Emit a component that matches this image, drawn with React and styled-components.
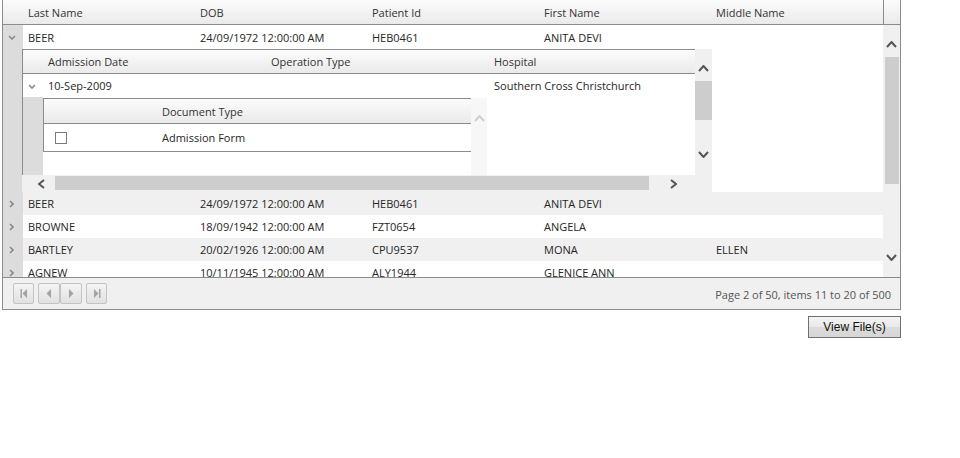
import React from "react";
import styled, { createGlobalStyle } from "styled-components";

const GlobalStyle = createGlobalStyle`
  * { box-sizing: border-box; }
  html, body { margin: 0; background: #fff; }
  body {
    font-family: "Open Sans", "Segoe UI", sans-serif;
    font-size: 11px;
    color: #262626;
  }
`;

const Page = styled.div`
  width: 960px;
  height: 458px;
  padding-left: 2px;
  overflow: hidden;
`;

const Grid = styled.div`
  width: 899px;
  border: 1px solid #8c8c8c;
  border-top: 0;
`;

const HeaderBar = styled.div`
  display: grid;
  grid-template-columns: 20px repeat(5, 172px) 17px;
  height: 25px;
  border-bottom: 1px solid #8c8c8c;
  background: linear-gradient(#fcfcfc, #eaeaea);
`;

const HeadCell = styled.div`
  display: flex;
  align-items: center;
  padding: 0 0 0 5px;
  white-space: nowrap;
  overflow: hidden;
  color: #333;
  border-left: ${(p) => (p.$divider ? "1px solid #8c8c8c" : "0")};
`;

const Body = styled.div`
  display: flex;
  height: 252px;
`;

const Viewport = styled.div`
  width: 880px;
  overflow: hidden;
`;

const Row = styled.div`
  display: grid;
  grid-template-columns: ${(p) => p.$cols || "20px repeat(5, 172px)"};
  height: ${(p) => p.$h || 23}px;
  background: ${(p) => (p.$alt ? "#f0f0f0" : "#fff")};
`;

const HierCell = styled.div`
  display: flex;
  align-items: center;
  justify-content: center;
  padding: 1px 3px 0 0;
  background: ${(p) => p.$bg || "#dcdcdc"};
`;

const Cell = styled.div`
  display: flex;
  align-items: center;
  padding: 0 0 0 5px;
  white-space: nowrap;
  overflow: hidden;
`;

const DetailRow = styled.div`
  display: grid;
  grid-template-columns: 19px 1fr;
  height: 143px;
  background: #fff;
`;

const DetailCell = styled.div`
  display: flex;
`;

const DetailGrid = styled.div`
  display: grid;
  grid-template-columns: 673px 17px;
  grid-template-rows: 126px 17px;
  width: 690px;
`;

const DViewport = styled.div`
  border-left: 1px solid #8c8c8c;
  border-top: 1px solid #8c8c8c;
  overflow: hidden;
  background: #fff;
`;

const DHeader = styled.div`
  display: grid;
  grid-template-columns: 20px repeat(3, 223px);
  width: 689px;
  height: 24px;
  border-bottom: 1px solid #8c8c8c;
  background: linear-gradient(#fcfcfc, #eaeaea);
`;

const NestedRow = styled.div`
  display: grid;
  grid-template-columns: 20px 1fr;
  height: 78px;
`;

const NestedCell = styled.div`
  display: flex;
  padding-top: 1px;
  background: #fff;
`;

const InnerGrid = styled.div`
  width: 428px;
  height: 77px;
`;

const InnerTable = styled.div`
  border: 1px solid #8c8c8c;
  border-right: 0;
`;

const InnerHead = styled.div`
  display: grid;
  grid-template-columns: 113px 1fr;
  height: 25px;
  border-bottom: 1px solid #8c8c8c;
  background: linear-gradient(#fcfcfc, #eaeaea);
`;

const InnerRow = styled.div`
  display: grid;
  grid-template-columns: 113px 1fr;
  height: 27px;
`;

const CheckCell = styled.div`
  display: flex;
  align-items: center;
  padding: 1px 0 0 11px;
`;

const CheckBox = styled.span`
  width: 12px;
  height: 12px;
  border: 1px solid #7a7a7a;
  background: #fff;
`;

const VScroll = styled.div`
  display: flex;
  flex-direction: column;
  align-items: center;
  width: ${(p) => p.$w || 17}px;
  background: ${(p) => p.$bg || "#f0f0f0"};
`;

const ArrowBox = styled.div`
  display: flex;
  justify-content: center;
  line-height: 0;
  margin-top: ${(p) => p.$mt || 0}px;
  margin-bottom: ${(p) => p.$mb || 0}px;
  margin-left: ${(p) => p.$ml || 0}px;
`;

const VThumb = styled.div`
  align-self: stretch;
  margin: ${(p) => p.$mt}px ${(p) => p.$mr || 0}px 0 ${(p) => p.$mlft || 0}px;
  height: ${(p) => p.$h}px;
  background: #cdcdcd;
`;

const Spacer = styled.div`
  flex: 1;
`;

const HScroll = styled.div`
  display: flex;
  align-items: center;
  padding-left: 16px;
  background: #f0f0f0;
`;

const HThumb = styled.div`
  width: 594px;
  height: 14px;
  margin-left: 10px;
  margin-bottom: 1px;
  background: #cdcdcd;
`;

const Corner = styled.div`
  background: #f0f0f0;
`;

const Filler = styled.div`
  flex: 1;
  background: #fff;
`;

const Pager = styled.div`
  display: flex;
  align-items: center;
  height: 32px;
  padding: 0 9px 0 10px;
  border-top: 1px solid #8c8c8c;
  background: #f0f0f0;
`;

const PagerGroup = styled.div`
  display: flex;
  margin-right: 4px;
`;

const PagerButton = styled.button`
  display: flex;
  align-items: center;
  justify-content: center;
  width: ${(p) => p.$w || 21}px;
  height: 21px;
  padding: 0;
  margin: 0;
  border: 1px solid #c3c3c3;
  border-radius: 2px;
  background: linear-gradient(#f4f4f4, #e1e1e1);
`;

const PagerInfo = styled.div`
  margin-left: auto;
  padding-top: 2px;
  color: #555;
`;

const Footer = styled.div`
  display: flex;
  justify-content: flex-end;
  width: 899px;
  margin-top: 6px;
`;

const ActionButton = styled.button`
  width: 93px;
  height: 22px;
  padding: 0;
  border: 1px solid #707070;
  border-radius: 0;
  background: linear-gradient(#f4f4f4 0%, #e9e9e9 50%, #dcdcdc 51%, #d6d6d6 100%);
  font-family: "Liberation Sans", Arial, sans-serif;
  font-size: 12px;
  color: #111;
`;

const Chevron = ({ dir, w = 8, h = 5, color = "#8a8a8a", sw = 1.6 }) => {
  const d = {
    down: `M1 1 L${w / 2} ${h - 1} L${w - 1} 1`,
    up: `M1 ${h - 1} L${w / 2} 1 L${w - 1} ${h - 1}`,
    right: `M1 1 L${w - 1} ${h / 2} L1 ${h - 1}`,
    left: `M${w - 1} 1 L1 ${h / 2} L${w - 1} ${h - 1}`,
  }[dir];
  return (
    <svg width={w} height={h} viewBox={`0 0 ${w} ${h}`}>
      <path d={d} fill="none" stroke={color} strokeWidth={sw} />
    </svg>
  );
};

const PagerIcon = ({ kind }) => {
  const c = "#a3a3a3";
  return (
    <svg width="8" height="9" viewBox="0 0 8 9">
      {kind === "first" && (
        <>
          <rect x="0.5" y="0" width="1.5" height="9" fill={c} />
          <polygon points="7,0 2.5,4.5 7,9" fill={c} />
        </>
      )}
      {kind === "prev" && <polygon points="6,0 1.5,4.5 6,9" fill={c} />}
      {kind === "next" && <polygon points="2,0 6.5,4.5 2,9" fill={c} />}
      {kind === "last" && (
        <>
          <polygon points="1,0 5.5,4.5 1,9" fill={c} />
          <rect x="6" y="0" width="1.5" height="9" fill={c} />
        </>
      )}
    </svg>
  );
};

const columns = ["Last Name", "DOB", "Patient Id", "First Name", "Middle Name"];

const patients = [
  ["BEER", "24/09/1972 12:00:00 AM", "HEB0461", "ANITA DEVI", ""],
  ["BROWNE", "18/09/1942 12:00:00 AM", "FZT0654", "ANGELA", ""],
  ["BARTLEY", "20/02/1926 12:00:00 AM", "CPU9537", "MONA", "ELLEN"],
  ["AGNEW", "10/11/1945 12:00:00 AM", "ALY1944", "GLENICE ANN", ""],
];

const expanded = ["BEER", "24/09/1972 12:00:00 AM", "HEB0461", "ANITA DEVI", ""];

const arrowColor = "#555";

export default function App() {
  return (
    <Page>
      <GlobalStyle />
      <Grid>
        <HeaderBar>
          <div />
          {columns.map((c) => (
            <HeadCell key={c}>{c}</HeadCell>
          ))}
          <HeadCell $divider />
        </HeaderBar>

        <Body>
          <Viewport>
            <Row $h={24}>
              <HierCell>
                <Chevron dir="down" />
              </HierCell>
              {expanded.map((v, i) => (
                <Cell key={i}>{v}</Cell>
              ))}
            </Row>

            <DetailRow>
              <HierCell />
              <DetailCell>
                <DetailGrid>
                  <DViewport>
                    <DHeader>
                      <div />
                      <HeadCell>Admission Date</HeadCell>
                      <HeadCell>Operation Type</HeadCell>
                      <HeadCell>Hospital</HeadCell>
                    </DHeader>
                    <Row $cols="20px repeat(3, 223px)">
                      <HierCell $bg="#fff">
                        <Chevron dir="down" />
                      </HierCell>
                      <Cell>10-Sep-2009</Cell>
                      <Cell />
                      <Cell>Southern Cross Christchurch</Cell>
                    </Row>
                    <NestedRow>
                      <HierCell />
                      <NestedCell>
                        <InnerGrid>
                          <InnerTable>
                            <InnerHead>
                              <div />
                              <HeadCell>Document Type</HeadCell>
                            </InnerHead>
                            <InnerRow>
                              <CheckCell>
                                <CheckBox />
                              </CheckCell>
                              <Cell>Admission Form</Cell>
                            </InnerRow>
                          </InnerTable>
                        </InnerGrid>
                        <VScroll $w={16} $bg="#f7f7f7">
                          <ArrowBox $mt={17}>
                            <Chevron dir="up" w={11} h={7} color="#cfcfcf" sw={2} />
                          </ArrowBox>
                        </VScroll>
                        <Filler />
                      </NestedCell>
                    </NestedRow>
                  </DViewport>

                  <VScroll>
                    <ArrowBox $mt={16}>
                      <Chevron dir="up" w={11} h={7} color={arrowColor} sw={2} />
                    </ArrowBox>
                    <VThumb $mt={9} $h={39} />
                    <Spacer />
                    <ArrowBox $mb={17}>
                      <Chevron dir="down" w={11} h={7} color={arrowColor} sw={2} />
                    </ArrowBox>
                  </VScroll>

                  <HScroll>
                    <ArrowBox>
                      <Chevron dir="left" w={7} h={10} color={arrowColor} sw={2} />
                    </ArrowBox>
                    <HThumb />
                    <ArrowBox $ml={21}>
                      <Chevron dir="right" w={7} h={10} color={arrowColor} sw={2} />
                    </ArrowBox>
                  </HScroll>
                  <Corner />
                </DetailGrid>
                <Filler />
              </DetailCell>
            </DetailRow>

            {patients.map((p, i) => (
              <Row key={i} $alt={i % 2 === 0}>
                <HierCell>
                  <Chevron dir="right" w={5} h={8} />
                </HierCell>
                {p.map((v, j) => (
                  <Cell key={j}>{v}</Cell>
                ))}
              </Row>
            ))}
          </Viewport>

          <VScroll>
            <ArrowBox $mt={16}>
              <Chevron dir="up" w={11} h={7} color={arrowColor} sw={2} />
            </ArrowBox>
            <VThumb $mt={9} $h={127} $mlft={2} $mr={1} />
            <Spacer />
            <ArrowBox $mb={16}>
              <Chevron dir="down" w={11} h={7} color={arrowColor} sw={2} />
            </ArrowBox>
          </VScroll>
        </Body>

        <Pager>
          <PagerGroup>
            <PagerButton>
              <PagerIcon kind="first" />
            </PagerButton>
          </PagerGroup>
          <PagerGroup>
            <PagerButton $w={22}>
              <PagerIcon kind="prev" />
            </PagerButton>
            <PagerButton $w={22}>
              <PagerIcon kind="next" />
            </PagerButton>
          </PagerGroup>
          <PagerGroup>
            <PagerButton>
              <PagerIcon kind="last" />
            </PagerButton>
          </PagerGroup>
          <PagerInfo>Page 2 of 50, items 11 to 20 of 500</PagerInfo>
        </Pager>
      </Grid>

      <Footer>
        <ActionButton>View File(s)</ActionButton>
      </Footer>
    </Page>
  );
}
